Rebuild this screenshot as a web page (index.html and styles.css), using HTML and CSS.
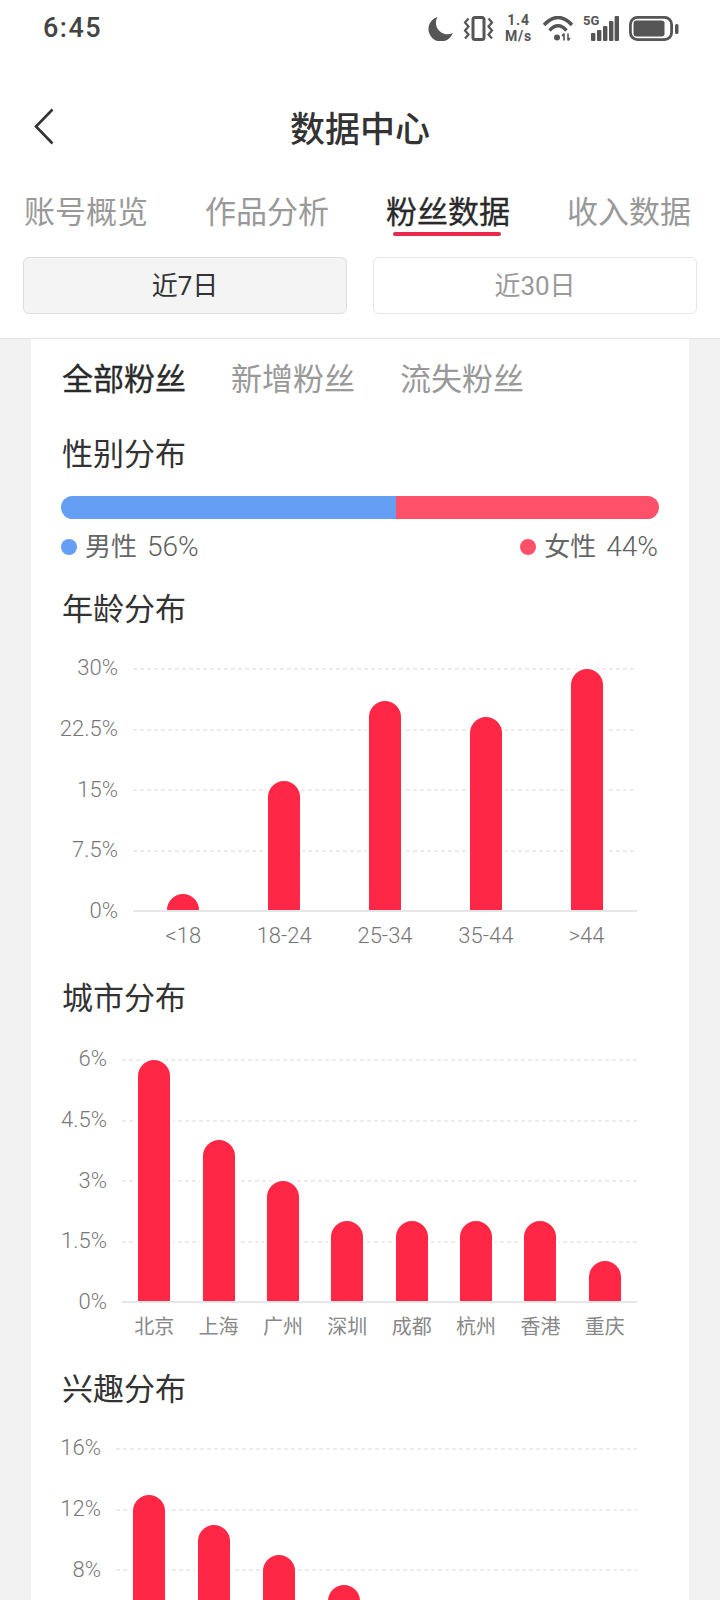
FILE: index.html
```html
<!DOCTYPE html>
<html lang="zh-CN">
  <head>
    <meta charset="UTF-8" />
    <meta name="viewport" content="width=device-width, initial-scale=1.0" />
    <title>数据中心</title>
    <link rel="stylesheet" href="styles.css">
  </head>
  <body>
    <div class="page">
      <div class="header">
        <div class="status-bar">
          <span class="time">6:45</span>
          <div class="status-icons">
            <svg width="25" height="25" viewBox="0 0 25 25"><path d="M9.5 1A12.5 12.5 0 1 0 24.8 17 11.5 11.5 0 0 1 9.5 1Z" fill="#555"/></svg>
            <svg width="31" height="25" viewBox="0 0 31 25" fill="none" stroke="#555"><rect x="10" y="1.5" width="11" height="22" rx="2" stroke-width="3"/><path d="M5.5 2.5 2 6.5 5.5 10.5 2 14.5 5.5 18.5 2 22.5" stroke-width="2.2"/><path d="M25.5 2.5 29 6.5 25.5 10.5 29 14.5 25.5 18.5 29 22.5" stroke-width="2.2"/></svg>
            <div class="speed"><span>1.4</span><span>M/s</span></div>
            <svg width="30" height="25" viewBox="0 0 30 25" fill="none" stroke="#555"><path d="M1 9Q15 -6 29 9" stroke-width="3.6"/><path d="M6.5 14.5Q15 5 23.5 14.5" stroke-width="3.4"/><circle cx="14" cy="21.5" r="3" fill="#555" stroke="none"/><path d="M21 24.5V17.5M19 20 21 17.5M25 17.5V24.5M25 24.5 27 22" stroke-width="1.6"/></svg>
            <div class="signal">
              <span class="network">5G</span>
              <svg width="36" height="25" viewBox="0 0 36 25" fill="#555"><rect x="8" y="17" width="4.4" height="8" rx="1"/><rect x="14" y="14" width="4.4" height="11" rx="1"/><rect x="20" y="10" width="4.4" height="15" rx="1"/><rect x="26" y="5" width="4.4" height="20" rx="1"/><rect x="31.6" y="0" width="4.4" height="25" rx="1"/></svg>
            </div>
            <svg width="50" height="25" viewBox="0 0 50 25" fill="#555"><rect x="1.4" y="1.4" width="41.2" height="22.2" rx="7" fill="none" stroke="#555" stroke-width="2.8"/><rect x="4.5" y="4.5" width="31" height="16" rx="3"/><rect x="46" y="8" width="3.5" height="10" rx="1.5"/></svg>
          </div>
        </div>

        <div class="title-bar">
          <svg class="back-icon" width="20" height="37" viewBox="0 0 20 37" fill="none"><path d="M18.5 1.5 2 18.5 18.5 35.5" stroke="#333" stroke-width="2.6"/></svg>
          <h1>数据中心</h1>
        </div>

        <div class="tabs">
          <span class="tab">账号概览</span>
          <span class="tab">作品分析</span>
          <span class="tab active">粉丝数据</span>
          <span class="tab">收入数据</span>
        </div>

        <div class="range-buttons">
          <button class="range-button selected">近7日</button>
          <button class="range-button">近30日</button>
        </div>
      </div>

      <div class="card">
        <div class="fan-tabs">
          <span class="fan-tab active">全部粉丝</span>
          <span class="fan-tab">新增粉丝</span>
          <span class="fan-tab">流失粉丝</span>
        </div>

        <h2 class="gender-title">性别分布</h2>
        <div class="gender-bar">
          <div class="gender-male"></div>
          <div class="gender-female"></div>
        </div>
        <div class="legend">
          <span class="legend-item"><i class="dot dot-male"></i>男性 <b>56%</b></span>
          <span class="legend-item"><i class="dot dot-female"></i>女性 <b>44%</b></span>
        </div>

        <!-- Age -->
        <h2>年龄分布</h2>
        <div class="chart chart-age">
          <div class="y-axis"><span>30%</span><span>22.5%</span><span>15%</span><span>7.5%</span><span>0%</span></div>
          <div class="plot">
            <div class="grid-lines"><i></i><i></i><i></i><i></i><i class="axis"></i></div>
            <div class="bars">
              <div class="bar-slot"><div class="bar" style="height: 6.67%"></div></div>
              <div class="bar-slot"><div class="bar" style="height: 53.33%"></div></div>
              <div class="bar-slot"><div class="bar" style="height: 86.67%"></div></div>
              <div class="bar-slot"><div class="bar" style="height: 80%"></div></div>
              <div class="bar-slot"><div class="bar" style="height: 100%"></div></div>
            </div>
          </div>
          <div class="x-axis x-axis-num"><span>&lt;18</span><span>18-24</span><span>25-34</span><span>35-44</span><span>&gt;44</span></div>
        </div>

        <!-- City -->
        <h2>城市分布</h2>
        <div class="chart chart-city">
          <div class="y-axis"><span>6%</span><span>4.5%</span><span>3%</span><span>1.5%</span><span>0%</span></div>
          <div class="plot">
            <div class="grid-lines"><i></i><i></i><i></i><i></i><i class="axis"></i></div>
            <div class="bars">
              <div class="bar-slot"><div class="bar" style="height: 100%"></div></div>
              <div class="bar-slot"><div class="bar" style="height: 66.67%"></div></div>
              <div class="bar-slot"><div class="bar" style="height: 50%"></div></div>
              <div class="bar-slot"><div class="bar" style="height: 33.33%"></div></div>
              <div class="bar-slot"><div class="bar" style="height: 33.33%"></div></div>
              <div class="bar-slot"><div class="bar" style="height: 33.33%"></div></div>
              <div class="bar-slot"><div class="bar" style="height: 33.33%"></div></div>
              <div class="bar-slot"><div class="bar" style="height: 16.67%"></div></div>
            </div>
          </div>
          <div class="x-axis"><span>北京</span><span>上海</span><span>广州</span><span>深圳</span><span>成都</span><span>杭州</span><span>香港</span><span>重庆</span></div>
        </div>

        <!-- Interests, runs past the bottom of the screen -->
        <h2>兴趣分布</h2>
        <div class="chart chart-interest">
          <div class="y-axis"><span>16%</span><span>12%</span><span>8%</span><span></span><span></span></div>
          <div class="plot">
            <div class="grid-lines"><i></i><i></i><i></i><i></i><i class="axis"></i></div>
            <div class="bars">
              <div class="bar-slot"><div class="bar" style="height: 81%"></div></div>
              <div class="bar-slot"><div class="bar" style="height: 68.5%"></div></div>
              <div class="bar-slot"><div class="bar" style="height: 56%"></div></div>
              <div class="bar-slot"><div class="bar" style="height: 43.5%"></div></div>
              <div class="bar-slot"></div>
              <div class="bar-slot"></div>
              <div class="bar-slot"></div>
              <div class="bar-slot"></div>
            </div>
          </div>
        </div>
      </div>
    </div>
  </body>
</html>
```

FILE: styles.css
```css
body {
  font-family: Roboto, "Noto Sans CJK SC", sans-serif;
  margin: 0;
  padding: 0;
  color: #333;
  background: #f2f2f2;
}

.page {
  height: 100vh;
  overflow: hidden;
}

h1,
h2 {
  font-weight: 400;
  margin: 0;
}

/* Header */
.header {
  background-color: #fff;
  height: 339px;
  box-sizing: border-box;
  border-bottom: 1px solid #e4e4e4;
}

.status-bar {
  height: 56px;
  padding: 0 41px 0 43px;
  display: flex;
  justify-content: space-between;
  align-items: center;
}

.time {
  font-size: 27px;
  font-weight: 500;
  letter-spacing: 1.5px;
  color: #444;
}

.status-icons {
  display: flex;
  align-items: center;
  gap: 10px;
}

.status-icons svg {
  display: block;
}

.speed {
  width: 29px;
  display: flex;
  flex-direction: column;
  align-items: center;
  font-size: 14px;
  font-weight: 700;
  line-height: 16.5px;
  letter-spacing: 0.8px;
  color: #555;
}

.signal {
  position: relative;
}

.network {
  position: absolute;
  left: 0;
  top: -2px;
  font-size: 13px;
  font-weight: 700;
  line-height: 13px;
  color: #555;
}

.title-bar {
  margin-top: 44px;
  height: 56px;
  padding-left: 34px;
  display: grid;
  grid-template-columns: 1fr auto 1fr;
  align-items: center;
}

.title-bar h1 {
  grid-column: 2;
  grid-row: 1;
  font-size: 35px;
  line-height: 50px;
  padding-top: 6px;
  margin-left: -34px;
  font-weight: 500;
}

.back-icon {
  grid-column: 1;
  grid-row: 1;
  margin-top: -4px;
}

.tabs {
  margin-top: 35px;
  padding-left: 24px;
  display: flex;
  gap: 57px;
}

.tab {
  position: relative;
  font-size: 31px;
  line-height: 44px;
  color: #999;
}

.tab.active {
  color: #2a2a2a;
  -webkit-text-stroke: 0.3px #2a2a2a;
}

.tab.active::after {
  content: "";
  position: absolute;
  left: 7px;
  right: 9px;
  bottom: -1px;
  height: 4px;
  border-radius: 2px;
  background-color: #e8294c;
}

.range-buttons {
  margin-top: 22px;
  padding: 0 23px;
  display: flex;
  gap: 26px;
}

.range-button {
  flex: 1;
  height: 57px;
  font-family: inherit;
  font-size: 26px;
  color: #999;
  background-color: #fff;
  border: 1px solid #e6e6e6;
  border-radius: 6px;
  padding: 0 0 5px;
}

.range-button.selected {
  color: #333;
  background-color: #f4f4f4;
  border-color: #ddd;
}

/* Card */
.card {
  margin: 0 31px;
  padding: 19px 30px 0 31px;
  background-color: #fff;
}

.card h2 {
  font-size: 31px;
  line-height: 44px;
  margin-top: 23px;
}

.card h2.gender-title {
  margin-top: 31px;
}

.card .chart + h2 {
  margin-top: 29px;
}

.fan-tabs {
  display: flex;
  gap: 45px;
}

.fan-tab {
  font-size: 31px;
  line-height: 44px;
  color: #999;
}

.fan-tab.active {
  color: #2a2a2a;
  -webkit-text-stroke: 0.3px #2a2a2a;
}

.gender-bar {
  margin-top: 19px;
  margin-left: -1px;
  height: 23px;
  border-radius: 12px;
  overflow: hidden;
  display: flex;
}

.gender-male {
  flex: 56;
  background-color: #659ff4;
}

.gender-female {
  flex: 44;
  background-color: #ff5069;
}

.legend {
  margin: 10px 1px 0 -1px;
  display: flex;
  justify-content: space-between;
}

.legend-item {
  display: flex;
  align-items: center;
  gap: 8px;
  font-size: 26px;
  line-height: 36px;
  color: #666;
}

.legend-item b {
  font-size: 28px;
  font-weight: 300;
  margin-left: 2px;
  color: #5f5f5f;
}

.dot {
  width: 16px;
  height: 16px;
  border-radius: 50%;
}

.dot-male {
  background-color: #659ff4;
}

.dot-female {
  background-color: #ff5069;
}

/* Charts */
.chart {
  display: grid;
  column-gap: 15px;
  margin-top: 36px;
  margin-right: 22px;
}

.chart-age {
  grid-template-columns: 56px 1fr;
}

.chart-city {
  grid-template-columns: 45px 1fr;
  margin-top: 38px;
}

.chart-interest {
  grid-template-columns: 39px 1fr;
}

.y-axis {
  height: 244px;
  padding-bottom: 1px;
  box-sizing: border-box;
  display: flex;
  flex-direction: column;
  justify-content: space-between;
  align-items: flex-end;
}

.y-axis span {
  height: 0;
  line-height: 0;
  font-size: 22px;
  font-weight: 300;
  color: #777;
  white-space: nowrap;
}

.plot {
  height: 244px;
  display: grid;
}

.grid-lines,
.bars {
  grid-area: 1 / 1;
}

.grid-lines {
  display: flex;
  flex-direction: column;
  justify-content: space-between;
}

.grid-lines i {
  height: 2px;
  background: repeating-linear-gradient(to right, #ececec 0, #ececec 4px, transparent 4px, transparent 7px);
}

.grid-lines i.axis {
  background: #e6e6e6;
}

.bars {
  height: 242px;
  padding-top: 1px;
  box-sizing: border-box;
  overflow: hidden;
  display: flex;
  align-items: stretch;
}

.bar-slot {
  flex: 1;
  display: flex;
  justify-content: center;
  align-items: flex-end;
}

.bar {
  width: 32px;
  border-radius: 16px 16px 0 0;
  background-color: #ff2745;
  box-shadow: 0 0 0 3px #fff;
}

.x-axis {
  grid-column: 2;
  height: 24px;
  margin-top: 12px;
  display: flex;
}

.x-axis span {
  flex: 1;
  text-align: center;
  font-size: 20px;
  line-height: 24px;
  color: #888;
}

.x-axis-num span {
  font-size: 22px;
  font-weight: 300;
  color: #777;
}
```
